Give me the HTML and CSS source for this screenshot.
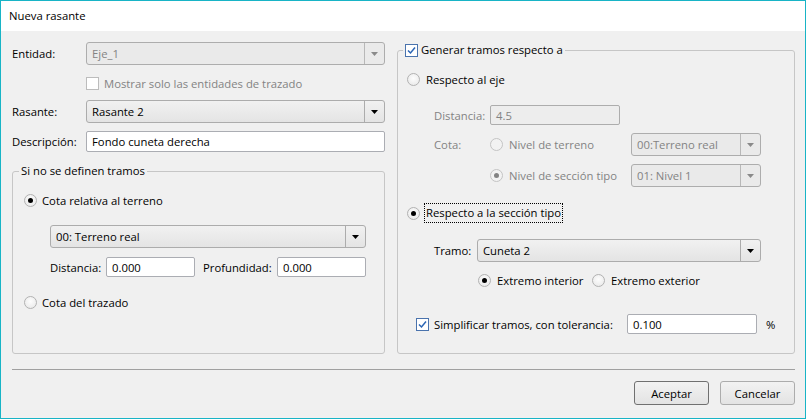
FILE: index.html
```html
<!DOCTYPE html>
<html lang="es">
<head>
<meta charset="utf-8">
<title>Nueva rasante</title>
<link rel="stylesheet" href="styles.css">
</head>
<body>
<div class="window">
  <div class="titlebar">Nueva rasante</div>
  <div class="content">
    <div class="main">
      <div class="left">
        <div class="frow r-entidad">
          <span class="flabel">Entidad:</span>
          <div class="combo disabled w299"><span class="ctext">Eje_1</span><span class="carrow"><svg width="7" height="4" viewBox="0 0 7 4"><polygon points="0,0 7,0 3.5,4"/></svg></span></div>
        </div>
        <div class="frow r-check">
          <span class="check dis-check"></span><span class="dis">Mostrar solo las entidades de trazado</span>
        </div>
        <div class="frow r-rasante">
          <span class="flabel">Rasante:</span>
          <div class="combo w299"><span class="ctext">Rasante 2</span><span class="carrow"><svg width="7" height="4" viewBox="0 0 7 4"><polygon points="0,0 7,0 3.5,4"/></svg></span></div>
        </div>
        <div class="frow r-desc">
          <span class="flabel">Descripción:</span>
          <div class="input w299">Fondo cuneta derecha</div>
        </div>
        <fieldset class="group g-left">
          <legend class="lg-left">Si no se definen tramos</legend>
          <div class="rrow l-cota"><span class="radio on"></span><span class="rlabel">Cota relativa al terreno</span></div>
          <div class="combo w316 l-combo"><span class="ctext">00: Terreno real</span><span class="carrow"><svg width="7" height="4" viewBox="0 0 7 4"><polygon points="0,0 7,0 3.5,4"/></svg></span></div>
          <div class="irow l-dist">
            <span class="lab-dist">Distancia:</span>
            <div class="input w89">0.000</div>
            <span class="lab-prof">Profundidad:</span>
            <div class="input w89">0.000</div>
          </div>
          <div class="rrow l-traz"><span class="radio"></span><span class="rlabel">Cota del trazado</span></div>
        </fieldset>
      </div>
      <fieldset class="group g-right">
        <legend class="lg-right"><span class="check checked"><svg width="11" height="11" viewBox="0 0 11 11"><polyline points="2,5.5 4.5,8 9,2.5" fill="none" stroke="#2b65b5" stroke-width="1.5"/></svg></span>Generar tramos respecto a</legend>
        <div class="rrow r-eje"><span class="radio"></span><span class="rlabel r-text">Respecto al eje</span></div>
        <div class="sub r-dist">
          <span class="slabel dis">Distancia:</span>
          <div class="input disabled w130">4.5</div>
        </div>
        <div class="sub r-cota">
          <span class="slabel dis">Cota:</span>
          <span class="radio dis-radio"></span><span class="optlabel dis">Nivel de terreno</span>
          <div class="combo disabled w130"><span class="ctext">00:Terreno real</span><span class="carrow"><svg width="7" height="4" viewBox="0 0 7 4"><polygon points="0,0 7,0 3.5,4"/></svg></span></div>
        </div>
        <div class="sub r-nivel">
          <span class="slabel"></span>
          <span class="radio dis-radio on"></span><span class="optlabel dis">Nivel de sección tipo</span>
          <div class="combo disabled w130"><span class="ctext">01: Nivel 1</span><span class="carrow"><svg width="7" height="4" viewBox="0 0 7 4"><polygon points="0,0 7,0 3.5,4"/></svg></span></div>
        </div>
        <div class="rrow r-secc"><span class="radio on r-focus-radio"></span><span class="focus">Respecto a la sección tipo</span></div>
        <div class="sub r-tramo">
          <span class="tlabel">Tramo:</span>
          <div class="combo w284"><span class="ctext">Cuneta 2</span><span class="carrow"><svg width="7" height="4" viewBox="0 0 7 4"><polygon points="0,0 7,0 3.5,4"/></svg></span></div>
        </div>
        <div class="sub r-ext">
          <span class="radio on"></span><span class="extlabel">Extremo interior</span>
          <span class="radio"></span><span class="extlabel2">Extremo exterior</span>
        </div>
        <div class="rrow r-simp">
          <span class="check checked"><svg width="11" height="11" viewBox="0 0 11 11"><polyline points="2,5.5 4.5,8 9,2.5" fill="none" stroke="#2b65b5" stroke-width="1.5"/></svg></span>
          <span class="simplabel">Simplificar tramos, con tolerancia:</span>
          <div class="input w130">0.100</div>
          <span class="pct">%</span>
        </div>
      </fieldset>
    </div>
    <div class="sep"></div>
    <div class="buttons">
      <button class="btn default">Aceptar</button>
      <button class="btn">Cancelar</button>
    </div>
  </div>
</div>
</body>
</html>
```
FILE: styles.css
```css
* { box-sizing: border-box; }
body {
  margin: 0;
  font-family: "Open Sans", "Noto Sans", sans-serif;
  font-size: 11.3px;
  color: #000;
}
.window {
  width: 806px;
  height: 419px;
  border: 1px solid #18b4c6;
  background: #f0f0f0;
  display: flex;
  flex-direction: column;
}
.titlebar {
  height: 30px;
  background: #fff;
  padding-left: 8px;
  line-height: 30px;
  font-size: 11.3px;
}
.content {
  flex: 1;
  padding: 11px 10px 0 11px;
  display: flex;
  flex-direction: column;
}
.main {
  display: flex;
  gap: 12px;
  height: 312px;
}
.left {
  width: 373px;
  display: flex;
  flex-direction: column;
}
.frow { display: flex; align-items: center; }
.flabel { width: 74px; }
.dis { color: #838383; }

.r-entidad { height: 23px; }
.r-check { height: 22px; margin-top: 7px; padding-left: 74px; }
.r-check .check { margin-right: 5px; }
.r-rasante { height: 23px; margin-top: 6px; }
.r-desc { height: 21px; margin-top: 8px; }

/* combo */
.combo {
  display: flex;
  height: 23px;
  border: 1px solid #acacac;
  border-radius: 3px;
  background: linear-gradient(#f1f1f1, #e4e4e4);
  align-items: stretch;
}
.combo .ctext {
  flex: 1;
  padding-left: 5px;
  display: flex;
  align-items: center;
  white-space: nowrap;
  overflow: hidden;
}
.combo .carrow {
  width: 20px;
  border-left: 1px solid #acacac;
  display: flex;
  align-items: center;
  justify-content: center;
}
.combo .carrow svg { fill: #000; }
.combo.disabled { background: #eaeaea; border-color: #adadad; }
.combo.disabled .ctext { color: #838383; }
.combo.disabled .carrow { border-left-color: #b8b8b8; }
.combo.disabled .carrow svg { fill: #8a8a8a; }

.w299 { width: 299px; }
.w316 { width: 316px; }
.w284 { width: 284px; }
.w130 { width: 130px; }
.w89 { width: 89px; }

/* input */
.input {
  height: 21px;
  background: #fff;
  border: 1px solid #abadb3;
  border-radius: 2px;
  padding-left: 5px;
  display: flex;
  align-items: center;
  white-space: nowrap;
}
.input.disabled { background: #ededed; border-color: #adadad; color: #838383; }

/* checkbox */
.check {
  width: 13px;
  height: 13px;
  border: 1px solid #333;
  background: #fff;
  display: inline-flex;
  align-items: center;
  justify-content: center;
  flex: none;
}
.check.dis-check { border-color: #bcbcbc; background: #fff; }
.check.checked { border-color: #4a73ad; }

/* radio */
.radio {
  width: 13px;
  height: 13px;
  border-radius: 50%;
  border: 1px solid #b2b2b2;
  background: radial-gradient(circle at 50% 40%, #fdfdfd 0%, #e6e6e6 100%);
  position: relative;
  flex: none;
}
.radio.on::after {
  content: "";
  position: absolute;
  left: 3px;
  top: 3px;
  width: 5px;
  height: 5px;
  border-radius: 50%;
  background: #000;
}
.radio.dis-radio { border-color: #c4c4c4; background: #f2f2f2; }
.radio.dis-radio.on::after { background: #838383; }

/* groups */
.group {
  margin: 0;
  padding: 0;
  min-width: 0;
  border: 1px solid #c6c6c6;
  border-radius: 3px;
}
.group legend {
  height: 16px;
  line-height: 16px;
  padding: 0 2px;
}
.g-left {
  flex: 1;
  margin-top: 11px;
  padding-left: 11px;
}
.lg-left { margin-left: -5px; }
.g-right {
  width: 398px;
  padding-left: 9px;
}
.lg-right { margin-left: -4px; display: flex; align-items: center; }
.lg-right .check { margin-right: 3px; }

.rrow { display: flex; align-items: center; height: 20px; }
.rrow .radio { margin-right: 5px; }
.irow { display: flex; align-items: center; height: 20px; margin-left: 26px; }
.irow .input { height: 20px; }

.l-cota { margin-top: 11px; }
.l-combo { margin-top: 15px; margin-left: 26px; }
.l-dist { margin-top: 9px; }
.lab-dist { width: 56px; }
.lab-prof { width: 74px; margin-left: 8px; }
.l-traz { margin-top: 15px; }

.r-eje { margin-top: 11px; }
.r-eje .radio { margin-right: 6px; }
.sub { display: flex; align-items: center; margin-left: 27px; }
.slabel { width: 56px; flex: none; }
.r-dist { height: 20px; margin-top: 16px; }
.r-dist .input { height: 20px; }
.r-cota { height: 23px; margin-top: 8px; }
.r-nivel { height: 23px; margin-top: 8px; }
.r-cota .radio, .r-nivel .radio { margin-right: 6px; }
.optlabel { width: 122px; }
.r-secc { margin-top: 16px; }
.r-secc .radio { margin-right: 4px; }
.focus {
  border: 1px dotted #000;
  padding: 0 1px;
  height: 20px;
  line-height: 18px;
}
.r-tramo { height: 23px; margin-top: 16px; }
.tlabel { width: 43px; }
.r-ext { height: 20px; margin-top: 8px; margin-left: 71px; }
.r-ext .radio { margin-right: 6px; }
.extlabel { width: 95px; }
.r-simp { margin-top: 24px; padding-left: 9px; }
.r-simp .check { margin-right: 5px; }
.simplabel { width: 193px; }
.r-simp .input { height: 20px; }
.pct { margin-left: 9px; }

.sep {
  height: 1px;
  background: #a0a0a0;
  margin-top: 15px;
}
.buttons {
  display: flex;
  justify-content: flex-end;
  gap: 11px;
  margin-top: 11px;
}
.btn {
  width: 75px;
  height: 24px;
  font-family: inherit;
  font-size: 11.3px;
  color: #000;
  border: 1px solid #acacac;
  border-radius: 3px;
  background: linear-gradient(#f2f2f2, #e3e3e3);
  padding: 0;
}
.btn.default { border-color: #707070; }
```
